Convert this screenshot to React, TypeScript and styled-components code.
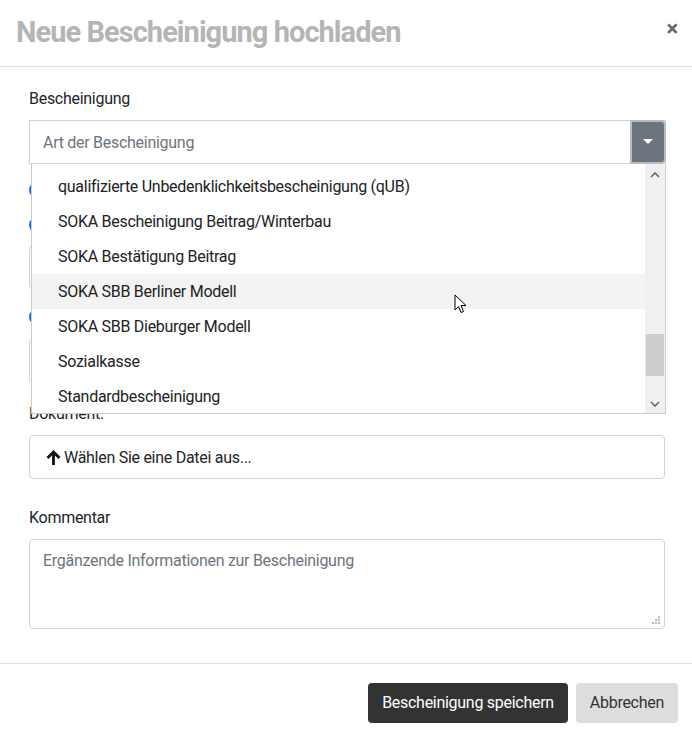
import { createGlobalStyle } from 'styled-components';
import styled from 'styled-components';

const GlobalStyle = createGlobalStyle`
    html, body {
        margin: 0;
        padding: 0;
        background: #fff;
        font-family: Roboto, "Liberation Sans", sans-serif;
        color: #212529;
        letter-spacing: -0.28px;
    }
    * { box-sizing: border-box; }
`

const SModal = styled.div`
    width: 692px;
    height: 739px;
    background: #fff;
    display: flex;
    flex-direction: column;
`
const SHeader = styled.div`
    height: 67px;
    border-bottom: 1px solid #dee2e6;
    display: flex;
    align-items: center;
    justify-content: space-between;
    padding: 0 14px 2px 16px;
`
const STitle = styled.h4`
    margin: 0;
    font-size: 29px;
    font-weight: 700;
    color: #b5b5b5;
    letter-spacing: -0.95px;
`
const SClose = styled.span`
    font-size: 22px;
    font-weight: 700;
    color: #666;
    line-height: 1;
    margin-bottom: 6px;
`
const SBody = styled.div`
    flex: 1;
    padding: 21px 26px 0 29px;
    display: flex;
    flex-direction: column;
`
const SLabel = styled.label<{ $mt?: number }>`
    display: block;
    font-size: 16px;
    line-height: 22px;
    margin-top: ${p => p.$mt ?? 0}px;
    margin-bottom: 10px;
`
const SSelectWrap = styled.div`
    position: relative;
`
const SSelect = styled.div`
    height: 44px;
    border: 1px solid #ced4da;
    display: flex;
    align-items: center;
    padding-left: 13px;
    font-size: 16px;
    color: #6c757d;
    position: relative;
`
const SCaret = styled.div`
    position: absolute;
    right: -1px;
    top: -1px;
    bottom: -1px;
    width: 36px;
    background: #6c757d;
    border: 2px solid #b8bdc2;
    border-radius: 0 5px 5px 0;
    display: flex;
    align-items: center;
    justify-content: center;
`
const SList = styled.div`
    position: absolute;
    left: 2px;
    right: 0;
    top: 44px;
    height: 250px;
    border: 1px solid #ccc;
    border-top: none;
    background: #fff;
    display: flex;
    z-index: 2;
`
const SItems = styled.div`
    flex: 1;
    padding-top: 5px;
`
const SItem = styled.div<{ $hover?: boolean }>`
    height: 35px;
    display: flex;
    align-items: center;
    padding-left: 26px;
    font-size: 16px;
    color: #222;
    background: ${p => (p.$hover ? '#f3f3f3' : 'transparent')};
    position: relative;
`
const SScroll = styled.div`
    width: 20px;
    background: #f0f0f0;
    display: flex;
    flex-direction: column;
    align-items: center;
    justify-content: space-between;
    padding: 8px 0 6px;
    position: relative;
`
const SThumb = styled.div`
    position: absolute;
    left: 1px;
    right: 1px;
    top: 170px;
    height: 42px;
    background: #cdcdcd;
`
const SHidden = styled.div`
    display: flex;
    flex-direction: column;
    padding-bottom: 20px;
`
const SRadio = styled.div<{ $mt: number }>`
    width: 18px;
    height: 18px;
    margin-top: ${p => p.$mt}px;
    border-radius: 50%;
    border: 2px solid #0d6efd;
`
const SBackInput = styled.div<{ $mt: number }>`
    height: 44px;
    margin-top: ${p => p.$mt}px;
    border: 1px solid #ced4da;
    border-radius: 4px;
`
const SFile = styled.div`
    height: 44px;
    border: 1px solid #ced4da;
    border-radius: 4px;
    display: flex;
    align-items: center;
    gap: 3px;
    padding-left: 16px;
    font-size: 16px;
    color: #212529;
    margin-right: 1px;
`
const STextarea = styled.div`
    height: 90px;
    border: 1px solid #ced4da;
    border-radius: 4px;
    padding: 11px 13px;
    font-size: 16px;
    color: #6c757d;
    position: relative;
    margin-right: 1px;
`
const SGrip = styled.svg`
    position: absolute;
    right: 3px;
    bottom: 3px;
`
const SFooter = styled.div`
    height: 76px;
    border-top: 1px solid #dee2e6;
    display: flex;
    align-items: center;
    justify-content: flex-end;
    gap: 8px;
    padding: 2px 14px 0 0;
`
const SButton = styled.button<{ $primary?: boolean }>`
    height: 40px;
    border: none;
    border-radius: 4px;
    padding: 0 14px;
    font-family: Roboto, "Liberation Sans", sans-serif;
    font-size: 16px;
    letter-spacing: -0.28px;
    background: ${p => (p.$primary ? '#333' : '#ddd')};
    color: ${p => (p.$primary ? '#fff' : '#333')};
`

const items = [
    'qualifizierte Unbedenklichkeitsbescheinigung (qUB)',
    'SOKA Bescheinigung Beitrag/Winterbau',
    'SOKA Bestätigung Beitrag',
    'SOKA SBB Berliner Modell',
    'SOKA SBB Dieburger Modell',
    'Sozialkasse',
    'Standardbescheinigung',
]

const Cursor = () => (
    <svg width="14" height="22" viewBox="0 0 14 22" style={{ position: 'absolute', left: 422, top: 20 }}>
        <path d="M1 1 L1 16 L4.5 12.5 L7 18.5 L9.5 17.5 L7 11.5 L12 11.5 Z" fill="#fff" stroke="#000" strokeWidth="1" strokeLinejoin="round" />
    </svg>
)

const App = () => {
    return (
        <SModal>
            <GlobalStyle />
            <SHeader>
                <STitle>Neue Bescheinigung hochladen</STitle>
                <SClose>×</SClose>
            </SHeader>
            <SBody>
                <SLabel>Bescheinigung</SLabel>
                <SSelectWrap>
                    <SSelect>
                        Art der Bescheinigung
                        <SCaret>
                            <svg width="10" height="6" viewBox="0 0 10 6"><path d="M0 0 L10 0 L5 5 Z" fill="#fff" /></svg>
                        </SCaret>
                    </SSelect>
                    <SList>
                        <SItems>
                            {items.map((t, i) => (
                                <SItem key={t} $hover={i === 3}>
                                    {t}
                                    {i === 3 && <Cursor />}
                                </SItem>
                            ))}
                        </SItems>
                        <SScroll>
                            <svg width="10" height="6" viewBox="0 0 10 6"><path d="M1 5 L5 1 L9 5" fill="none" stroke="#555" strokeWidth="1.3" /></svg>
                            <SThumb />
                            <svg width="10" height="6" viewBox="0 0 10 6"><path d="M1 1 L5 5 L9 1" fill="none" stroke="#555" strokeWidth="1.3" /></svg>
                        </SScroll>
                    </SList>
                    <SHidden>
                        <SRadio $mt={17} />
                        <SRadio $mt={17} />
                        <SBackInput $mt={11} />
                        <SRadio $mt={19} />
                        <SBackInput $mt={13} />
                    </SHidden>
                </SSelectWrap>
                <SLabel>Dokument:</SLabel>
                <SFile>
                    <svg width="15" height="17" viewBox="0 0 15 17">
                        <path d="M7.5 16 V3.5 M1.5 9 L7.5 3 L13.5 9" fill="none" stroke="#111" strokeWidth="2.8" />
                    </svg>
                    Wählen Sie eine Datei aus...
                </SFile>
                <SLabel $mt={28}>Kommentar</SLabel>
                <STextarea>
                    Ergänzende Informationen zur Bescheinigung
                    <SGrip width="9" height="9" viewBox="0 0 9 9">
                        <g fill="#bbb">
                            <rect x="6" y="0" width="2" height="2" />
                            <rect x="3" y="3" width="2" height="2" />
                            <rect x="6" y="3" width="2" height="2" />
                            <rect x="0" y="6" width="2" height="2" />
                            <rect x="3" y="6" width="2" height="2" />
                            <rect x="6" y="6" width="2" height="2" />
                        </g>
                    </SGrip>
                </STextarea>
            </SBody>
            <SFooter>
                <SButton $primary>Bescheinigung speichern</SButton>
                <SButton>Abbrechen</SButton>
            </SFooter>
        </SModal>
    )
}

export default App
